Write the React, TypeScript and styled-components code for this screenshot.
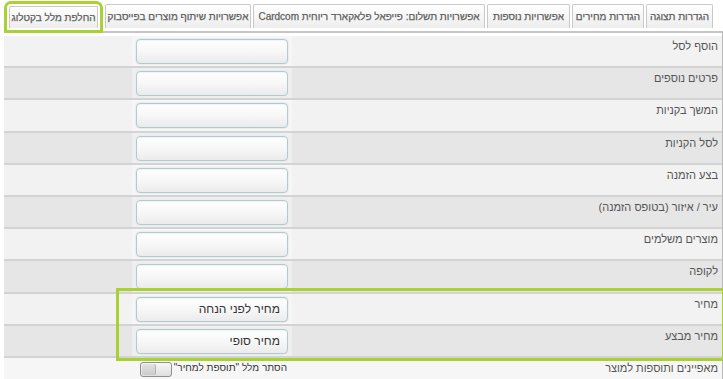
import React from "react";
import styled, { createGlobalStyle } from "styled-components";

const GlobalStyle = createGlobalStyle`
  html, body {
    margin: 0;
    padding: 0;
    background: #fff;
  }
  body {
    font-family: "Liberation Sans", Arial, "DejaVu Sans", sans-serif;
  }
`;

const Page = styled.div`
  direction: rtl;
  width: 723px;
  height: 379px;
  overflow: hidden;
  background: #fff;
`;

const TabBar = styled.div`
  display: flex;
  gap: 2px;
  padding: 4px 10px 0 0;
  height: 28px;
  box-sizing: border-box;
`;

const Tab = styled.div<{ $width: number; $active?: boolean }>`
  width: ${(p) => p.$width}px;
  flex-shrink: 0;
  height: 24px;
  box-sizing: border-box;
  display: flex;
  align-items: center;
  justify-content: center;
  border: 1px solid #c9c9c9;
  border-bottom: none;
  border-radius: 2px 2px 0 0;
  background: linear-gradient(#ffffff, #ededed);
  color: #5e5e5e;
  font-size: 10px;
  -webkit-text-stroke: 0.25px #5e5e5e;
  white-space: nowrap;
  ${(p) =>
    p.$active &&
    `
    margin-right: 5px;
    margin-top: 2px;
    height: 22px;
    outline: 3px solid #a9d134;
    outline-offset: 2px;
  `}
`;

const Panel = styled.div`
  margin-top: 3px;
  width: 719px;
  border-top: 2px solid #c6c6c6;
  border-right: 1px solid #b9b9b9;
  padding-top: 3px;
  box-sizing: border-box;
`;

const Row = styled.div<{ $dark?: boolean }>`
  display: grid;
  grid-template-columns: 1fr 160px 128px;
  height: 32.2px;
  box-sizing: border-box;
  background: ${(p) => (p.$dark ? "#e6e6e6" : "#f2f2f2")};
  border-bottom: 2px solid #d3d3d3;
`;

const LastRow = styled(Row)`
  border-bottom: none;
  background: #f6f6f6;
`;

const Label = styled.div`
  padding: 4px 4px 0 0;
  font-size: 11px;
  color: #555;
  line-height: 13px;
`;

const InputCell = styled.div`
  display: flex;
  align-items: flex-start;
  justify-content: center;
  padding-top: 3px;
  background: rgba(255, 255, 255, 0.35);
`;

const TextBox = styled.div`
  width: 152px;
  height: 25px;
  box-sizing: border-box;
  border: 1px solid #b5c8cc;
  border-radius: 4px;
  background: linear-gradient(#ffffff 0%, #f6f6f6 55%, #ebebeb 100%);
  box-shadow: 0 0 0 1px #e7eef0, inset 0 1px 1px #eef4f6;
  display: flex;
  align-items: center;
  padding: 0 7px;
  font-size: 12px;
  color: #333;
`;

const Spacer = styled.div``;

const Highlight = styled.div`
  position: relative;
  &::after {
    content: "";
    position: absolute;
    top: -6px;
    bottom: -3px;
    left: 112px;
    right: -3px;
    border: 3px solid #a9d134;
    pointer-events: none;
  }
`;

const ToggleCell = styled.div`
  display: flex;
  align-items: flex-start;
  gap: 2px;
  padding: 2px 5px 0 0;
  font-size: 10px;
  color: #333;
  white-space: nowrap;
`;

const ToggleText = styled.span`
  line-height: 14px;
  padding-top: 1px;
`;

const Switch = styled.div`
  width: 32px;
  height: 15px;
  margin-top: 2px;
  border: 1px solid #8f8f8f;
  border-radius: 3px;
  background: linear-gradient(#f7f7f7, #dedede);
  display: flex;
  justify-content: flex-end;
  padding: 1px;
  box-sizing: border-box;
  overflow: hidden;
`;

const Knob = styled.div`
  width: 13px;
  height: 100%;
  border-radius: 2px;
  background: linear-gradient(#e2e2e2, #cbcbcb);
  border-right: 1px solid #b0b0b0;
`;

const tabs = [
  { text: "הגדרות תצוגה", width: 67 },
  { text: "הגדרות מחירים", width: 72 },
  { text: "אפשרויות נוספות", width: 83 },
  { text: "אפשרויות תשלום: פייפאל פלאקארד ריוחית Cardcom", width: 232 },
  { text: "אפשרויות שיתוף מוצרים בפייסבוק", width: 146 },
];

const plainRows = [
  "הוסף לסל",
  "פרטים נוספים",
  "המשך בקניות",
  "לסל הקניות",
  "בצע הזמנה",
  "עיר / איזור (בטופס הזמנה)",
  "מוצרים משלמים",
  "לקופה",
];

const priceRows = [
  { label: "מחיר", value: "מחיר לפני הנחה" },
  { label: "מחיר מבצע", value: "מחיר סופי" },
];

const FieldRow: React.FC<{ label: string; value?: string; dark: boolean }> = ({
  label,
  value,
  dark,
}) => (
  <Row $dark={dark}>
    <Label>{label}</Label>
    <InputCell>
      <TextBox>{value}</TextBox>
    </InputCell>
    <Spacer />
  </Row>
);

const App: React.FC = () => {
  return (
    <Page>
      <GlobalStyle />
      <TabBar>
        {tabs.map((t) => (
          <Tab key={t.text} $width={t.width}>
            {t.text}
          </Tab>
        ))}
        <Tab $width={89} $active>
          החלפת מלל בקטלוג
        </Tab>
      </TabBar>
      <Panel>
        {plainRows.map((label, i) => (
          <FieldRow key={label} label={label} dark={i % 2 === 1} />
        ))}
        <Highlight>
          {priceRows.map((r, i) => (
            <FieldRow key={r.label} label={r.label} value={r.value} dark={i % 2 === 1} />
          ))}
        </Highlight>
        <LastRow>
          <Label>מאפיינים ותוספות למוצר</Label>
          <ToggleCell>
            <ToggleText>הסתר מלל "תוספת למחיר"</ToggleText>
            <Switch>
              <Knob />
            </Switch>
          </ToggleCell>
          <Spacer />
        </LastRow>
      </Panel>
    </Page>
  );
};

export default App;
